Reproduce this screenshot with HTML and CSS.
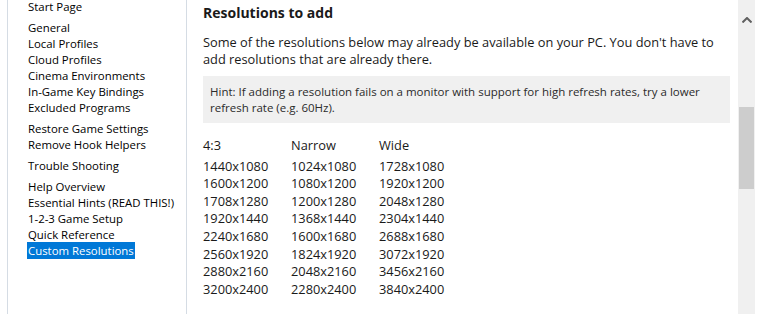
FILE: index.html
```html
<!DOCTYPE html>
<html>
<head lang="en">
    <meta charset="UTF-8">
    <title>Custom Resolutions</title>
    <link rel="stylesheet" href="styles.css">
</head>
<body>
    <div class="help-window">
        <div class="help-nav">
            <div class="nav-group">
                <div class="nav-item">Start Page</div>
            </div>
            <div class="nav-group">
                <div class="nav-item">General</div>
                <div class="nav-item">Local Profiles</div>
                <div class="nav-item">Cloud Profiles</div>
                <div class="nav-item">Cinema Environments</div>
                <div class="nav-item">In-Game Key Bindings</div>
                <div class="nav-item">Excluded Programs</div>
            </div>
            <div class="nav-group">
                <div class="nav-item">Restore Game Settings</div>
                <div class="nav-item">Remove Hook Helpers</div>
            </div>
            <div class="nav-group">
                <div class="nav-item">Trouble Shooting</div>
            </div>
            <div class="nav-group">
                <div class="nav-item">Help Overview</div>
                <div class="nav-item">Essential Hints (READ THIS!)</div>
                <div class="nav-item">1-2-3 Game Setup</div>
                <div class="nav-item">Quick Reference</div>
                <div class="nav-item"><span class="nav-selected">Custom Resolutions</span></div>
            </div>
        </div>

        <div class="help-content">
            <h2 class="help-title">Resolutions to add</h2>
            <p class="help-text">Some of the resolutions below may already be available on your PC. You don't have to add resolutions that are already there.</p>
            <div class="help-hint">Hint: If adding a resolution fails on a monitor with support for high refresh rates, try a lower refresh rate (e.g. 60Hz).</div>

            <div class="res-table">
                <div class="res-head">4:3</div>
                <div class="res-head">Narrow</div>
                <div class="res-head">Wide</div>

                <div>1440x1080</div><div>1024x1080</div><div>1728x1080</div>
                <div>1600x1200</div><div>1080x1200</div><div>1920x1200</div>
                <div>1708x1280</div><div>1200x1280</div><div>2048x1280</div>
                <div>1920x1440</div><div>1368x1440</div><div>2304x1440</div>
                <div>2240x1680</div><div>1600x1680</div><div>2688x1680</div>
                <div>2560x1920</div><div>1824x1920</div><div>3072x1920</div>
                <div>2880x2160</div><div>2048x2160</div><div>3456x2160</div>
                <div>3200x2400</div><div>2280x2400</div><div>3840x2400</div>
            </div>
        </div>

        <div class="scroll-bar">
            <div class="scroll-arrow">
                <svg width="10" height="6" viewBox="0 0 10 6">
                    <path d="M0.5 5.5 L5 1 L9.5 5.5" fill="none" stroke="#606060" stroke-width="2"/>
                </svg>
            </div>
            <div class="scroll-thumb"></div>
        </div>
    </div>
</body>
</html>
```

FILE: styles.css
```css
html,
body,
div,
p,
span,
h2 {
    padding: 0px;
    margin: 0px;
}

body {
    background: #ffffff;
    font-family: "Open Sans", "Noto Sans", sans-serif;
    color: #000000;
    overflow: hidden;
}

.help-window {
    display: flex;
    height: 314px;
    padding-left: 7px;
    padding-right: 7px;
}

/* 左侧目录 */
.help-nav {
    width: 180px;
    flex-shrink: 0;
    box-sizing: border-box;
    border-left: 1px solid #d5dce4;
    border-right: 1px solid #d5dce4;
    padding-left: 20px;
    margin-top: -1px;
    font-size: 11.4px;
    line-height: 16px;
}

.nav-group {
    margin-bottom: 5px;
}

.nav-item {
    height: 16px;
    white-space: nowrap;
}

.nav-selected {
    background: #0078d7;
    color: #ffffff;
    padding: 1px;
    margin-left: -1px;
}

/* 右侧内容 */
.help-content {
    flex: 1;
    padding: 3px 8px 0px 16px;
    color: #1a1a1a;
}

.help-title {
    font-size: 14px;
    font-weight: bold;
    line-height: 20px;
    margin-bottom: 11px;
}

.help-text {
    font-size: 12.8px;
    line-height: 17px;
    margin-bottom: 8px;
}

.help-hint {
    background: #f0f0f0;
    color: #2b2b2b;
    font-size: 11.5px;
    line-height: 16px;
    padding: 8px 8px 7px 7px;
    margin-bottom: 14px;
}

.res-table {
    display: grid;
    grid-template-columns: 88px 88px 88px;
    font-size: 12.8px;
    line-height: 17.6px;
}

.res-head {
    margin-bottom: 3px;
}

/* 滚动条 */
.scroll-bar {
    width: 17px;
    flex-shrink: 0;
    background: #f0f0f0;
    position: relative;
}

.scroll-arrow {
    height: 17px;
    display: flex;
    justify-content: center;
    align-items: center;
    margin-top: 11px;
}

.scroll-thumb {
    position: absolute;
    left: 1px;
    right: 1px;
    top: 107px;
    height: 82px;
    background: #cdcdcd;
}
```
